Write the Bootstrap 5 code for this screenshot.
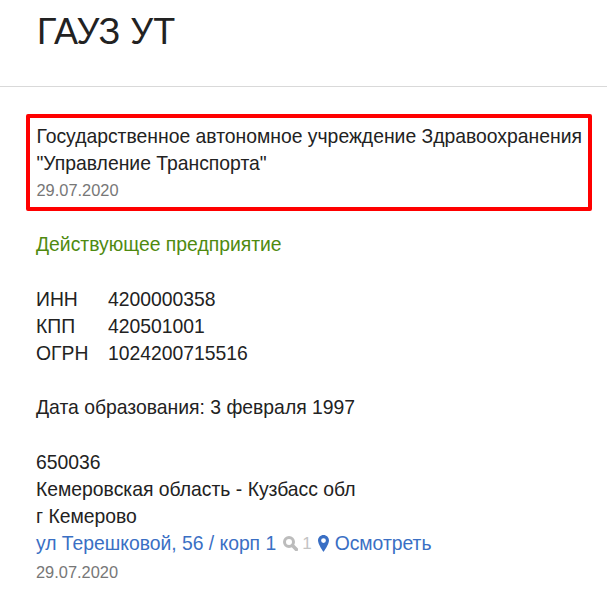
<!DOCTYPE html>
<html lang="ru">
<head>
<meta charset="utf-8">
<title>ГАУЗ УТ</title>
<link rel="stylesheet" href="https://cdn.jsdelivr.net/npm/bootstrap@5.3.0/dist/css/bootstrap.min.css">
<style>
html, body { overflow: hidden; }
body { font-family: "Liberation Sans", Arial, sans-serif; font-size: 19.35px; line-height: 27px; color: #222; background: #fff; }
.page-head { height: 87px; border-bottom: 1px solid #d9d9d9; padding: 9px 0 0 37px; }
.page-head h1 { font-family: "Liberation Sans", Arial, sans-serif; font-size: 36px; line-height: 46px; font-weight: 400; margin: 0; color: #222; }
.page-body { padding: 27px 0 0 36px; }
.marked { margin: 0 0 0 -10px; width: 566px; height: 97px; border: 4px solid #f00; border-radius: 2px; padding: 5px 0 0 6.5px; white-space: nowrap; }
.dim { color: #777; font-size: 16.4px; }
.status { color: #4f8a10; margin: 20px 0 28px; }
.reg-row { display: flex; }
.reg-key { width: 72px; }
.gap-block { margin-top: 27px; }
.gap-wide { margin-top: 28px; }
.addr-link { color: #3a6fc4; text-decoration: none; letter-spacing: -0.02px; }
.count { color: #c4c4c4; font-size: 17px; margin-left: 7px; gap: 4px; }
.pin-gap { margin-left: 6px; gap: 6px; }
.last-date { margin-top: 2px; }
</style>
</head>
<body>
<header class="page-head"><h1>ГАУЗ УТ</h1></header>
<main class="page-body">
  <div class="marked">
    <div>Государственное автономное учреждение Здравоохранения<br>"Управление Транспорта"</div>
    <div class="dim">29.07.2020</div>
  </div>
  <div class="status">Действующее предприятие</div>
  <div class="reg-row"><span class="reg-key">ИНН</span><span>4200000358</span></div>
  <div class="reg-row"><span class="reg-key">КПП</span><span>420501001</span></div>
  <div class="reg-row"><span class="reg-key">ОГРН</span><span>1024200715516</span></div>
  <div class="gap-block">Дата образования: 3 февраля 1997</div>
  <div class="gap-wide">650036</div>
  <div>Кемеровская область - Кузбасс обл</div>
  <div>г Кемерово</div>
  <div class="d-flex align-items-center">
    <a class="addr-link" href="#">ул Терешковой, 56 / корп 1</a>
    <span class="count d-inline-flex align-items-center">
      <svg width="15" height="15" viewBox="0 0 15 15" aria-hidden="true"><circle cx="6" cy="6" r="4.5" fill="none" stroke="#bcbcbc" stroke-width="3"/><path d="M9.5 9.5 13.4 13.4" stroke="#bcbcbc" stroke-width="3.6" stroke-linecap="round"/></svg>1</span>
    <a class="addr-link pin-gap d-inline-flex align-items-center" href="#">
      <svg width="11" height="17" viewBox="0 0 11 17" aria-hidden="true"><path fill="#3a6fc4" fill-rule="evenodd" d="M5.5 0C2.5 0 0 2.4 0 5.6 0 9.5 5.5 17 5.5 17S11 9.5 11 5.6C11 2.4 8.5 0 5.5 0Zm0 3.2a2.4 2.4 0 1 1 0 4.8 2.4 2.4 0 0 1 0-4.8Z"/></svg>Осмотреть</a>
  </div>
  <div class="dim last-date">29.07.2020</div>
</main>
<script src="https://cdn.jsdelivr.net/npm/bootstrap@5.3.0/dist/js/bootstrap.bundle.min.js"></script>
</body>
</html>
